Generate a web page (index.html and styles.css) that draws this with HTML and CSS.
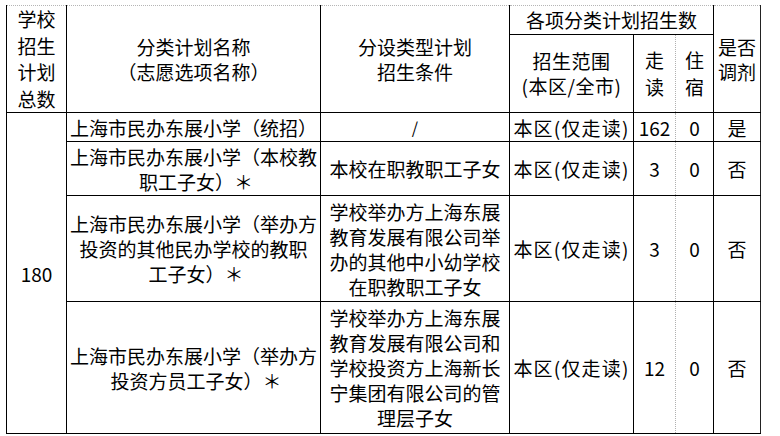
FILE: index.html
```html
<!DOCTYPE html>
<html lang="zh-CN">
<head>
<meta charset="utf-8">
<title>招生计划</title>
<link rel="stylesheet" href="styles.css">
</head>
<body>
<table class="plan">
  <colgroup>
    <col class="c1"><col class="c2"><col class="c3"><col class="c4"><col class="c5"><col class="c6"><col class="c7">
  </colgroup>
  <thead>
    <tr class="h1">
      <th rowspan="2" class="total-head">学校<br>招生<br>计划<br>总数</th>
      <th rowspan="2">分类计划名称<br>（志愿选项名称）</th>
      <th rowspan="2">分设类型计划<br>招生条件</th>
      <th colspan="3" class="group">各项分类计划招生数</th>
      <th rowspan="2" class="last">是否<br>调剂</th>
    </tr>
    <tr class="h2">
      <th class="range">招生范围<br>(本区/全市)</th>
      <th class="walk">走<br>读</th>
      <th class="board">住<br>宿</th>
    </tr>
  </thead>
  <tbody>
    <tr class="r1">
      <td rowspan="4" class="num">180</td>
      <td>上海市民办东展小学（统招）</td>
      <td class="slash">/</td>
      <td class="area">本区(仅走读)</td>
      <td class="num walk">162</td>
      <td class="num board">0</td>
      <td class="last">是</td>
    </tr>
    <tr class="r2">
      <td>上海市民办东展小学（本校教<br>职工子女）<span class="star">＊</span></td>
      <td>本校在职教职工子女</td>
      <td class="area">本区(仅走读)</td>
      <td class="num walk">3</td>
      <td class="num board">0</td>
      <td class="last">否</td>
    </tr>
    <tr class="r3">
      <td>上海市民办东展小学（举办方<br>投资的其他民办学校的教职<br>工子女）<span class="star">＊</span></td>
      <td>学校举办方上海东展<br>教育发展有限公司举<br>办的其他中小幼学校<br>在职教职工子女</td>
      <td class="area">本区(仅走读)</td>
      <td class="num walk">3</td>
      <td class="num board">0</td>
      <td class="last">否</td>
    </tr>
    <tr class="r4">
      <td>上海市民办东展小学（举办方<br>投资方员工子女）<span class="star">＊</span></td>
      <td>学校举办方上海东展<br>教育发展有限公司和<br>学校投资方上海新长<br>宁集团有限公司的管<br>理层子女</td>
      <td class="area">本区(仅走读)</td>
      <td class="num walk">12</td>
      <td class="num board">0</td>
      <td class="last">否</td>
    </tr>
  </tbody>
</table>
</body>
</html>
```

FILE: styles.css
```css
html, body {
  margin: 0;
  padding: 0;
  background: #fff;
}

body {
  padding: 5px 0 0 6px;
  font-family: "Noto Sans CJK SC", "Noto Sans", sans-serif;
  color: #000;
}

.plan {
  border-collapse: collapse;
  table-layout: fixed;
  width: 754px;
  font-size: 19px;
  line-height: 25px;
}

.c1 { width: 60px; }
.c2 { width: 254px; }
.c3 { width: 189px; }
.c4 { width: 124px; }
.c5 { width: 42px; }
.c6 { width: 38px; }
.c7 { width: 47px; }

.plan th,
.plan td {
  border: 1px solid #000;
  padding: 0;
  text-align: center;
  vertical-align: middle;
  font-weight: 400;
  white-space: nowrap;
  overflow: hidden;
}

.plan thead tr.h1 th {
  border-top: 1px dotted #b5b5b5;
}

.plan .total-head {
  line-height: 26.5px;
}

.plan tr.h1 { height: 28px; }
.plan tr.h2 { height: 77px; }
.plan tr.r1 { height: 29px; }
.plan tr.r2 { height: 54px; }
.plan tr.r3 { height: 106px; }
.plan tr.r4 { height: 132px; }

.plan .group {
  line-height: 26px;
}

.plan .walk,
.plan .board {
  line-height: 27px;
}

.plan .walk {
  border-right: 1px dotted #b0b0b0;
}

.plan .board {
  border-left: 1px dotted #b0b0b0;
}

.plan .area {
  letter-spacing: 1.2px;
}

.plan .range {
  letter-spacing: 0.5px;
}

.plan .slash {
  font-size: 16px;
}

.plan .star {
  display: inline-block;
  width: 14px;
  text-align: left;
  overflow: visible;
}

.plan .last {
  border-right: 1px solid #222;
}
```
